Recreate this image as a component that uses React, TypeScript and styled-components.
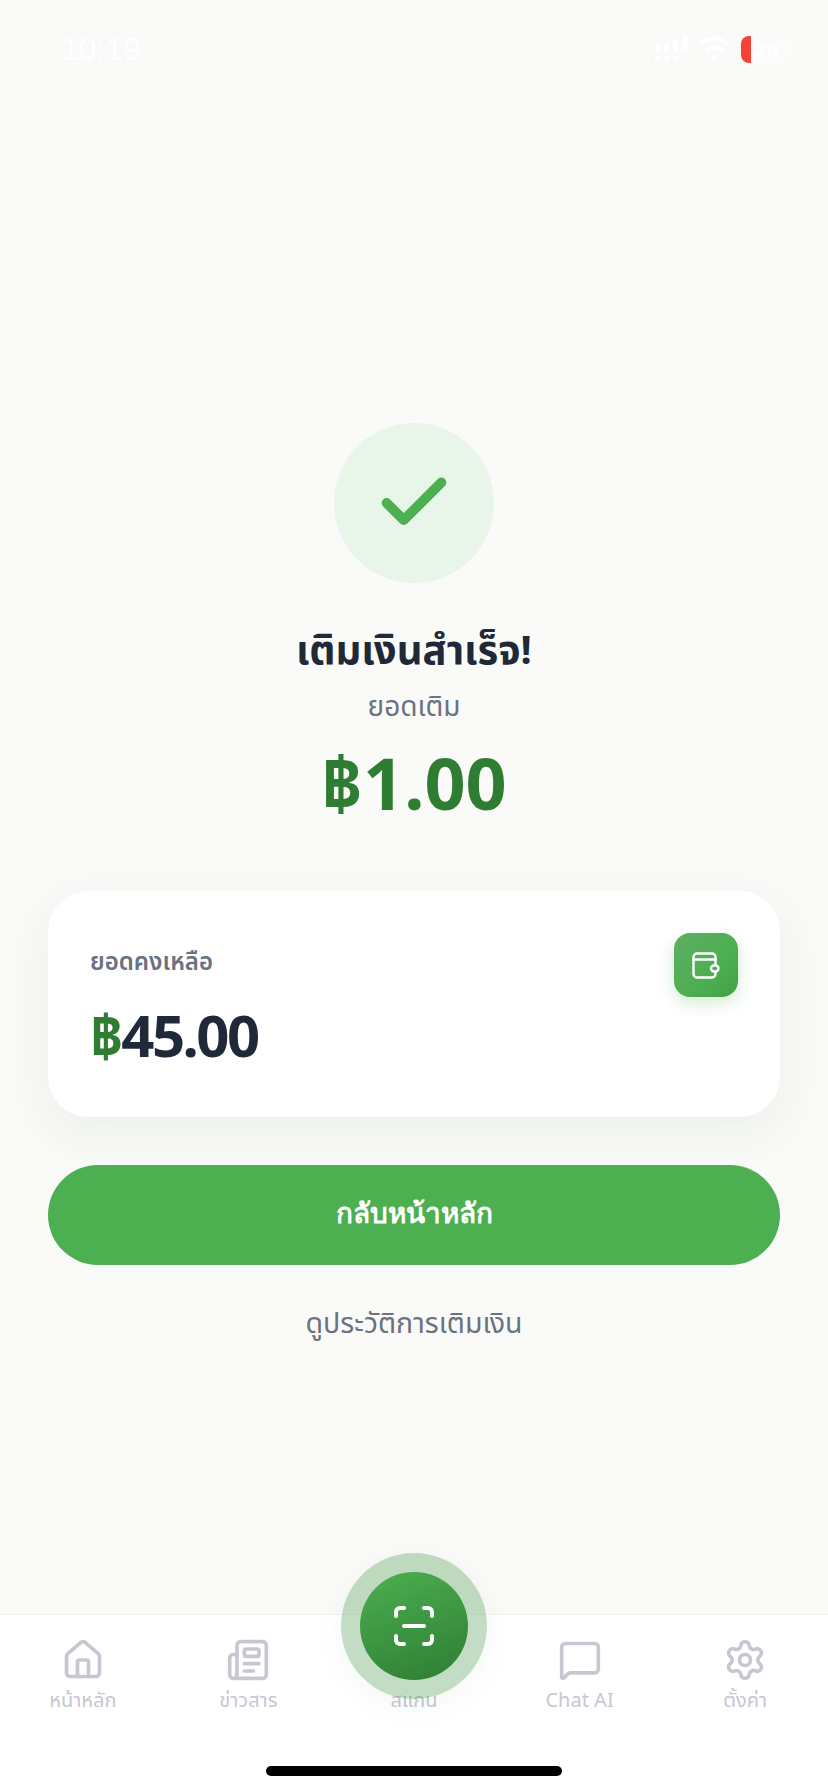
import React from 'react';
import styled, { createGlobalStyle } from 'styled-components';
import { Check, House, MessageSquare, Newspaper, ScanLine, Settings } from 'lucide-react';

const Global = createGlobalStyle`
  html, body { margin: 0; padding: 0; background: #fafaf8; }
  * { box-sizing: border-box; }
`;

const Page = styled.div`
  position: relative;
  width: 828px;
  height: 1792px;
  overflow: hidden;
  display: flex;
  flex-direction: column;
  background: #fafaf8;
  font-family: "Noto Sans", "Noto Sans Thai", "Open Sans", sans-serif;
`;

const StatusBar = styled.div`
  height: 100px;
  flex-shrink: 0;
  padding: 31px 36px 0 61px;
  display: flex;
  justify-content: space-between;
  align-items: flex-start;
  color: #fff;
`;

const Time = styled.span`
  font-family: "Liberation Sans", sans-serif;
  font-size: 32px;
  line-height: 36px;
`;

const StatusIcons = styled.div`
  display: flex;
  align-items: flex-start;
  gap: 11px;
  margin-top: 5px;
`;

const Battery = styled.div`
  width: 51px;
  height: 27px;
  display: flex;
  gap: 4px;
  font: 700 21px/27px "Liberation Sans", sans-serif;
  border-radius: 8px;
  background: rgba(255, 255, 255, 0.3);
`;

const BatteryFill = styled.div`
  width: 10px;
  height: 27px;
  background: #f44336;
  border-radius: 8px 0 0 8px;
`;

const Main = styled.main`
  flex: 1;
  display: flex;
  flex-direction: column;
  align-items: center;
  padding: 323px 48px 0;
`;

const SuccessCircle = styled.div`
  width: 160px;
  height: 160px;
  border-radius: 50%;
  background: #e8f5e9;
  color: #4caf50;
  display: flex;
  align-items: center;
  justify-content: center;
`;

const Title = styled.h1`
  margin: 42px 0 0;
  font-size: 40px;
  line-height: 48px;
  font-weight: 700;
  color: #1f2937;
`;

const Subtitle = styled.div`
  margin-top: 14px;
  font-size: 28px;
  line-height: 36px;
  color: #6b7280;
`;

const Amount = styled.div`
  margin-top: 11px;
  font-size: 72px;
  line-height: 96px;
  font-weight: 700;
  color: #2e7d32;
`;

const BalanceCard = styled.section`
  width: 100%;
  height: 226px;
  margin-top: 61px;
  padding: 42px;
  display: flex;
  justify-content: space-between;
  align-items: flex-start;
  background: #fff;
  border-radius: 40px;
  box-shadow: 0 16px 48px rgba(46, 125, 50, 0.08);
`;

const BalanceLabel = styled.div`
  margin-top: 12px;
  font-size: 24px;
  line-height: 32px;
  font-weight: 600;
  color: #6b7280;
`;

const BalanceValue = styled.div`
  margin-top: 23px;
  font-size: 58px;
  line-height: 70px;
  font-weight: 700;
  letter-spacing: -2.500px;
  color: #1f2937;
`;

const Baht = styled.span`
  color: #2e7d32;
`;

const WalletTile = styled.div`
  width: 64px;
  height: 64px;
  border-radius: 16px;
  background: linear-gradient(135deg, #5fae63, #4caf50 60%, #43a047);
  box-shadow: 0 6px 16px rgba(76, 175, 80, 0.25);
  display: flex;
  align-items: center;
  justify-content: center;
`;

const PrimaryButton = styled.button`
  width: 100%;
  height: 100px;
  flex-shrink: 0;
  margin-top: 48px;
  padding: 0 0 6px;
  border: 0;
  border-radius: 50px;
  background: #4caf50;
  color: #fff;
  font: 700 28px/36px "Noto Sans", sans-serif;
`;

const TextLink = styled.a`
  margin-top: 39px;
  font-size: 28.500px;
  line-height: 36px;
  color: #6b7280;
`;

const TabBar = styled.nav`
  position: relative;
  height: 178px;
  flex-shrink: 0;
  padding-top: 23px;
  display: grid;
  grid-template-columns: repeat(5, 1fr);
  background: #fff;
  border-top: 1px solid #f3f3f1;
`;

const TabItem = styled.div`
  display: flex;
  flex-direction: column;
  align-items: center;
  color: #c7c7d1;
  font-size: 20px;
  line-height: 28px;
  height: 80px;
`;

const TabIconSlot = styled.div`
  height: 44px;
  margin-bottom: 4px;
`;

const ScanHalo = styled.div`
  position: absolute;
  left: 341px;
  top: -62px;
  width: 146px;
  height: 146px;
  border-radius: 50%;
  background: rgba(56, 142, 60, 0.3);
  box-shadow: 0 8px 30px rgba(46, 125, 50, 0.05);
  display: flex;
  align-items: center;
  justify-content: center;
`;

const ScanButton = styled.div`
  width: 108px;
  height: 108px;
  border-radius: 50%;
  background: linear-gradient(160deg, #4caf50, #2e7d32);
  display: flex;
  align-items: center;
  justify-content: center;
  color: #fff;
`;

const HomeIndicator = styled.div`
  position: absolute;
  left: 266px;
  bottom: 16px;
  width: 296px;
  height: 10px;
  border-radius: 5px;
  background: #000;
`;

const SignalIcon = () => (
  <svg width="33" height="26" viewBox="0 0 33 26" fill="#fff">
    <rect x="0" y="9" width="5" height="7" rx="1" />
    <rect x="9" y="6" width="5" height="10" rx="1" />
    <rect x="18" y="3" width="5" height="13" rx="1" />
    <rect x="27" y="0" width="6" height="15" rx="1" />
    <rect x="0" y="20" width="5" height="6" rx="1" />
    <rect x="9" y="20" width="5" height="6" rx="1" />
    <rect x="18" y="20" width="5" height="6" rx="1" />
  </svg>
);

const WifiIcon = () => (
  <svg width="31" height="24" viewBox="0 0 31 24" fill="none" stroke="#fff" strokeWidth="4" strokeLinecap="round">
    <path d="M2.500 7.500c7.500-6.500 18.500-6.500 26 0" />
    <path d="M8 14c4.500-3.500 10.500-3.500 15 0" />
    <circle cx="15.500" cy="21" r="2.600" fill="#fff" stroke="none" />
  </svg>
);

const WalletIcon = () => (
  <svg width="28" height="27" viewBox="0 0 28 27" fill="none" stroke="#fff" strokeWidth="2.400" strokeLinecap="round" strokeLinejoin="round">
    <rect x="1.500" y="1.500" width="22" height="24" rx="3.500" />
    <path d="M1.500 7.500h22" />
    <rect x="19" y="13.500" width="7.500" height="6" rx="3" fill="#4caf50" />
  </svg>
);

const tabs = [
  { label: 'หน้าหลัก', icon: <House size={44} strokeWidth={2} /> },
  { label: 'ข่าวสาร', icon: <Newspaper size={44} strokeWidth={2} /> },
  { label: 'สแกน', icon: null },
  { label: 'Chat AI', icon: <MessageSquare size={44} strokeWidth={2} /> },
  { label: 'ตั้งค่า', icon: <Settings size={44} strokeWidth={2} /> },
];

export default function App() {
  return (
    <Page>
      <Global />
      <StatusBar>
        <Time>10:19</Time>
        <StatusIcons>
          <SignalIcon />
          <WifiIcon />
          <Battery>
            <BatteryFill />
            20
          </Battery>
        </StatusIcons>
      </StatusBar>
      <Main>
        <SuccessCircle>
          <Check size={82} strokeWidth={2.9} />
        </SuccessCircle>
        <Title>เติมเงินสำเร็จ!</Title>
        <Subtitle>ยอดเติม</Subtitle>
        <Amount>฿1.00</Amount>
        <BalanceCard>
          <div>
            <BalanceLabel>ยอดคงเหลือ</BalanceLabel>
            <BalanceValue>
              <Baht>฿</Baht>45.00
            </BalanceValue>
          </div>
          <WalletTile>
            <WalletIcon />
          </WalletTile>
        </BalanceCard>
        <PrimaryButton>กลับหน้าหลัก</PrimaryButton>
        <TextLink>ดูประวัติการเติมเงิน</TextLink>
      </Main>
      <TabBar>
        {tabs.map((tab) => (
          <TabItem key={tab.label}>
            <TabIconSlot>{tab.icon}</TabIconSlot>
            {tab.label}
          </TabItem>
        ))}
        <ScanHalo>
          <ScanButton>
            <ScanLine size={48} strokeWidth={2} />
          </ScanButton>
        </ScanHalo>
        <HomeIndicator />
      </TabBar>
    </Page>
  );
}
